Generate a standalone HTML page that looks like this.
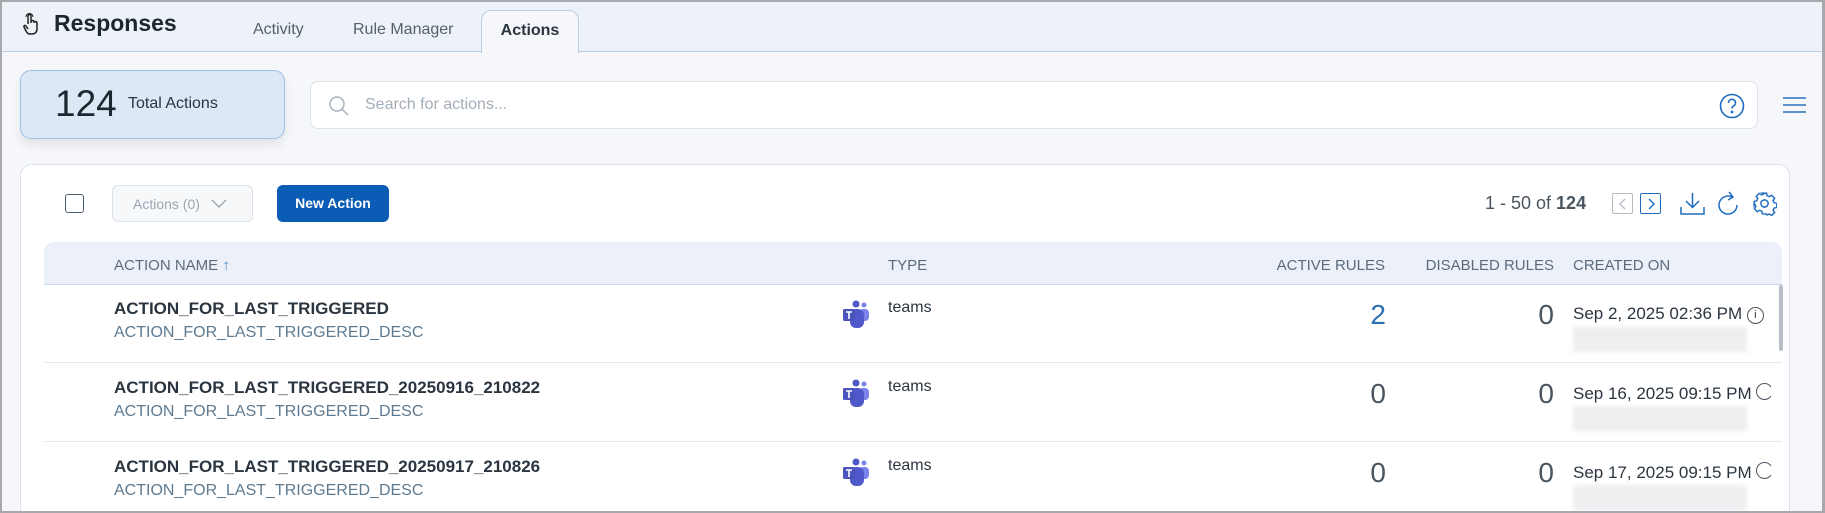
<!DOCTYPE html>
<html><head><meta charset="utf-8"><style>
*{box-sizing:border-box;margin:0;padding:0}
html,body{width:1825px;height:513px;overflow:hidden}
body{background:#f5f7fa;font-family:"Liberation Sans",sans-serif;position:relative;color:#2b3540}
#wrap{position:absolute;left:0;top:0;width:1825px;height:513px;overflow:hidden}
.a{position:absolute}
.frame{left:0;top:0;width:1825px;height:513px;border:2px solid #a7a9ac;border-right-width:3px;z-index:50;pointer-events:none}
.hdr{left:0;top:0;width:1825px;height:52px;background:#edf2f9;border-bottom:1px solid #b9cfe6}
.tab{top:21px;font-size:16px;color:#55606b}
.atab{left:481px;top:10px;width:98px;height:43px;background:#f5f7fa;border:1px solid #b9cfe6;border-bottom:none;border-radius:10px 10px 0 0;font-weight:bold;font-size:16px;color:#2b3540;text-align:center;padding-top:11px}
.card{left:20px;top:70px;width:265px;height:69px;background:#dce8f5;border:1px solid #9dc0e3;border-radius:11px;box-shadow:0 6px 10px rgba(0,0,0,.08)}
.search{left:310px;top:81px;width:1448px;height:48px;background:#fff;border:1px solid #dde3ea;border-radius:8px}
.main{left:20px;top:164px;width:1770px;height:360px;background:#fff;border:1px solid #dde3ea;border-radius:12px}
.th{top:257px;font-size:15px;color:#5a6b7b;white-space:nowrap}
.sep{left:44px;width:1738px;height:1px;background:#e6eaee}
.nm{font-size:17px;font-weight:bold;color:#2b3540;left:114px;white-space:nowrap}
.ds{font-size:16px;color:#5e7a90;left:114px;white-space:nowrap}
.num{font-size:28px;font-weight:300;color:#4a5560;text-align:right;width:60px}
.dt{left:1573px;font-size:17px;color:#2b3540;white-space:nowrap}
.blur{left:1573px;width:174px;height:25px;background:#eceef0;filter:blur(2px)}
.tt{left:888px;font-size:16px;color:#2b3540}
</style></head><body><div id="wrap">
<div class="a hdr"></div>
<svg class="a" style="left:22px;top:12px" width="18" height="24" viewBox="0 0 18 24" fill="none" stroke="#222" stroke-width="1.5"><path d="M6 12V4a1.5 1.5 0 0 1 3 0v7 M9 10a1.5 1.5 0 0 1 3 0v1 M12 11a1.5 1.5 0 0 1 3 0v6c0 3-2 5-5 5H8c-2 0-3-1-4-3l-2-4c-.5-1 .5-2 1.5-1.5L6 17"/><path d="M4 5a3.5 3.5 0 0 1 7 0" stroke-width="1"/></svg>
<div class="a" style="left:54px;top:10px;font-size:23px;font-weight:bold;color:#1e2630">Responses</div>
<div class="a tab" style="left:253px">Activity</div>
<div class="a tab" style="left:353px">Rule Manager</div>
<div class="a atab">Actions</div>

<div class="a card"><span class="a" style="left:34px;top:12px;font-size:37px;font-weight:500;color:#1e2630">124</span><span class="a" style="left:107px;top:24px;font-size:16px;color:#2b3540">Total Actions</span></div>

<div class="a search">
<svg class="a" style="left:16px;top:12px" width="24" height="24" viewBox="0 0 24 24" fill="none" stroke="#a8b3bd" stroke-width="1.5"><circle cx="10" cy="10" r="7"/><path d="M15 15l6 6"/></svg>
<span class="a" style="left:54px;top:14px;font-size:16px;color:#a4aeb8">Search for actions...</span>
<svg class="a" style="left:1408px;top:11px" width="26" height="26" viewBox="0 0 26 26" fill="none" stroke="#1f6cbf" stroke-width="1.6"><circle cx="13" cy="13" r="11.5"/><path d="M9.5 10a3.5 3.5 0 1 1 5 3c-1 .6-1.5 1.2-1.5 2.5"/><circle cx="13" cy="19" r=".6" fill="#1f6cbf"/></svg>
</div>
<svg class="a" style="left:1783px;top:96px" width="23" height="18" viewBox="0 0 23 18" stroke="#2c70bd" stroke-width="1.6"><path d="M0 2h23M0 9h23M0 16h23"/></svg>

<div class="a main"></div>
<div class="a" style="left:65px;top:194px;width:19px;height:19px;border:1.5px solid #4d5e6e;border-radius:3px"></div>
<div class="a" style="left:112px;top:185px;width:141px;height:37px;border:1px solid #dde3ea;border-radius:6px;background:#f6f8fa;font-size:14px;color:#9aa6b2;padding:10px 0 0 20px">Actions (0)<svg style="position:absolute;left:98px;top:13px" width="16" height="10" viewBox="0 0 16 10" fill="none" stroke="#9aa6b2" stroke-width="1.4"><path d="M1 1l7 7 7-7"/></svg></div>
<div class="a" style="left:277px;top:185px;width:112px;height:37px;background:#0b5cb5;border-radius:6px;color:#fff;font-size:14px;font-weight:bold;text-align:center;padding-top:10px">New Action</div>

<div class="a" style="left:1485px;top:193px;font-size:18px;color:#4a5560">1 - 50 of <b style="color:#4a5560">124</b></div>
<div class="a" style="left:1612px;top:193px;width:21px;height:21px;border:1px solid #b3bcc5;border-radius:2px"><svg style="position:absolute;left:5px;top:4px" width="9" height="12" viewBox="0 0 9 12" fill="none" stroke="#b3bcc5" stroke-width="1.3"><path d="M7 1L2 6l5 5"/></svg></div>
<div class="a" style="left:1640px;top:193px;width:21px;height:21px;border:1.3px solid #1f6cbf;border-radius:2px"><svg style="position:absolute;left:6px;top:4px" width="9" height="12" viewBox="0 0 9 12" fill="none" stroke="#1f6cbf" stroke-width="1.4"><path d="M2 1l5 5-5 5"/></svg></div>
<svg class="a" style="left:1680px;top:192px" width="25" height="23" viewBox="0 0 25 23" fill="none" stroke="#1f6cbf" stroke-width="1.5"><path d="M12.5 1v14M6 9l6.5 6.5L19 9M1 15v7h23v-7"/></svg>
<svg class="a" style="left:1717px;top:191px" width="22" height="25" viewBox="0 0 22 25" fill="none" stroke="#1f6cbf" stroke-width="1.5"><path d="M15 6a9 9 0 1 0 5 8"/><path d="M12 1l4 5-5 3"/></svg>
<svg class="a" style="left:1752px;top:191px" width="25" height="25" viewBox="0 0 24 24" fill="none" stroke="#1f6cbf" stroke-width="1.4"><circle cx="12" cy="12" r="3.5"/><path d="M10 2h4l.6 2.6 2 .9 2.3-1.4 2.8 2.8-1.4 2.3.9 2 2.6.6v4l-2.6.6-.9 2 1.4 2.3-2.8 2.8-2.3-1.4-2 .9L14 22h-4l-.6-2.6-2-.9-2.3 1.4-2.8-2.8 1.4-2.3-.9-2L2 14v-4l2.6-.6.9-2-1.4-2.3 2.8-2.8 2.3 1.4 2-.9z"/></svg>

<div class="a" style="left:44px;top:242px;width:1738px;height:43px;background:#ecf1f9;border-radius:10px 10px 0 0;border-bottom:1px solid #c9d8e8"></div>
<div class="a th" style="left:114px">ACTION NAME <span style="color:#4a8ad0">↑</span></div>
<div class="a th" style="left:888px">TYPE</div>
<div class="a th" style="left:1255px;width:130px;text-align:right">ACTIVE RULES</div>
<div class="a th" style="left:1404px;width:150px;text-align:right">DISABLED RULES</div>
<div class="a th" style="left:1573px">CREATED ON</div>
<div class="a" style="left:1779px;top:285px;width:4px;height:66px;background:#b7bec6;border-radius:2px"></div>

<div class="a nm" style="top:299px">ACTION_FOR_LAST_TRIGGERED</div>
<div class="a ds" style="top:324px">ACTION_FOR_LAST_TRIGGERED_DESC</div>
<div class="a nm" style="top:378px">ACTION_FOR_LAST_TRIGGERED_20250916_210822</div>
<div class="a ds" style="top:403px">ACTION_FOR_LAST_TRIGGERED_DESC</div>
<div class="a nm" style="top:457px">ACTION_FOR_LAST_TRIGGERED_20250917_210826</div>
<div class="a ds" style="top:482px">ACTION_FOR_LAST_TRIGGERED_DESC</div>
<div class="a sep" style="top:362px"></div>
<div class="a sep" style="top:441px"></div>

<svg width="0" height="0" style="position:absolute"><defs><g id="tm"><circle cx="22" cy="5" r="2.5" fill="#7b83eb"/><rect x="17" y="9" width="10" height="12" rx="4" fill="#7b83eb"/><circle cx="14" cy="4" r="3.5" fill="#5059c9"/><rect x="8" y="9" width="14" height="19" rx="6" fill="#5059c9"/><rect x="1" y="9" width="12" height="12" rx="1.5" fill="#4b53bc"/><path d="M4 12h6M7 12v7" stroke="#fff" stroke-width="1.6"/></g></defs></svg>
<svg class="a" style="left:842px;top:300px" width="30" height="30"><use href="#tm"/></svg>
<svg class="a" style="left:842px;top:379px" width="30" height="30"><use href="#tm"/></svg>
<svg class="a" style="left:842px;top:458px" width="30" height="30"><use href="#tm"/></svg>
<div class="a tt" style="top:299px">teams</div>
<div class="a tt" style="top:378px">teams</div>
<div class="a tt" style="top:457px">teams</div>

<div class="a num" style="left:1326px;top:299px;color:#2c6fb5">2</div>
<div class="a num" style="left:1494px;top:299px">0</div>
<div class="a num" style="left:1326px;top:378px">0</div>
<div class="a num" style="left:1494px;top:378px">0</div>
<div class="a num" style="left:1326px;top:457px">0</div>
<div class="a num" style="left:1494px;top:457px">0</div>

<div class="a" style="left:1573px;top:296px;width:198px;height:200px;overflow:hidden">
<div class="a dt" style="left:0;top:8px">Sep 2, 2025 02:36 PM <span style="display:inline-block;width:17px;height:17px;border:1.3px solid #4a5560;border-radius:50%;font-size:11px;text-align:center;line-height:15px;vertical-align:1px">i</span></div>
<div class="a dt" style="left:0;top:87px">Sep 16, 2025 09:15 PM <span style="display:inline-block;width:17px;height:17px;border:1.3px solid #4a5560;border-radius:50%;vertical-align:-1px"></span></div>
<div class="a dt" style="left:0;top:166px">Sep 17, 2025 09:15 PM <span style="display:inline-block;width:17px;height:17px;border:1.3px solid #4a5560;border-radius:50%;vertical-align:-1px"></span></div>
</div>
<div class="a blur" style="top:327px"></div>
<div class="a blur" style="top:406px"></div>
<div class="a blur" style="top:485px"></div>

<div class="a frame"></div>
</div></body></html>
